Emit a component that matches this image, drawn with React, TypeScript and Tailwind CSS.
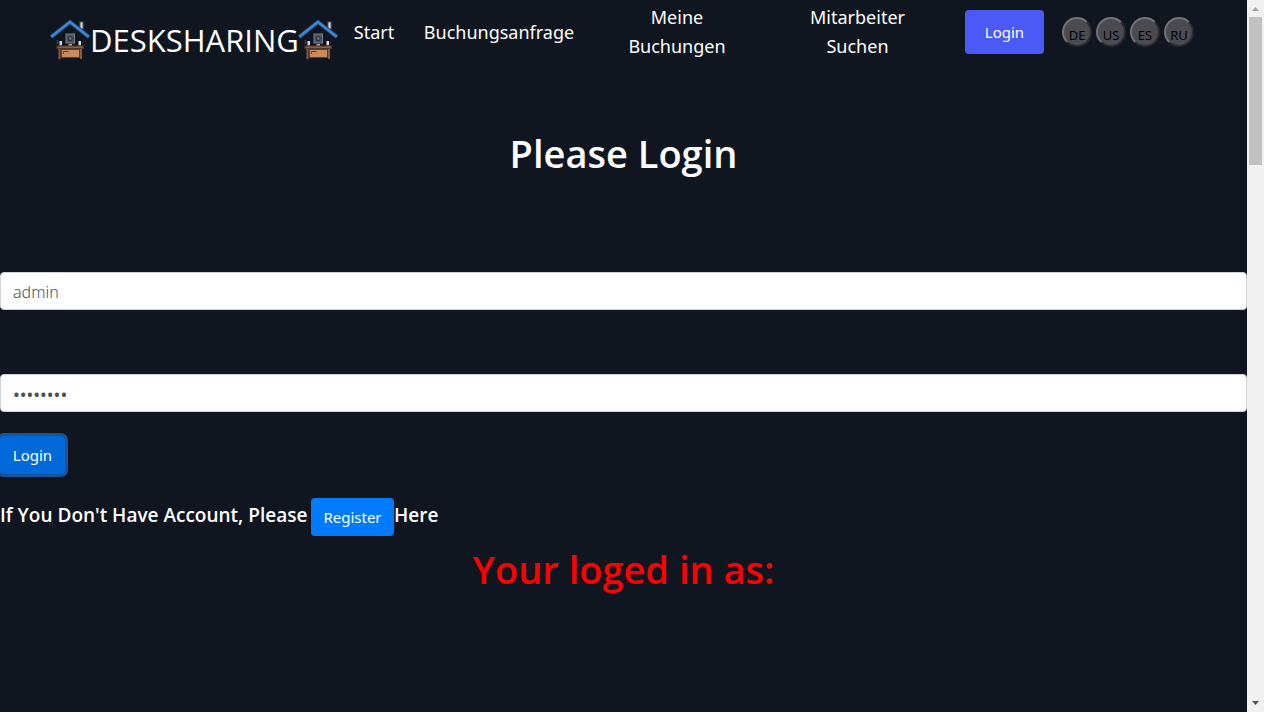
function DeskHouse() {
  return (
    <svg viewBox="0 0 40 42" className="h-[42px] w-10 shrink-0" aria-hidden="true">
      <rect x="30" y="3" width="3" height="7" fill="#d5d8dc" stroke="#555960" strokeWidth="1" />
      <path d="M1 18 L20 3 L39 18" fill="none" stroke="#23344f" strokeWidth="4.500" />
      <path d="M1.200 17.800 L20 3 L38.800 17.800" fill="none" stroke="#3a86d6" strokeWidth="2.800" />
      <rect x="16" y="15" width="8.500" height="9" fill="#50555f" stroke="#777c85" strokeWidth="1" />
      <circle cx="20.200" cy="19.500" r="2" fill="#6c717b" stroke="#2b2f38" strokeWidth="1.200" />
      <path d="M18.500 26h3.500" stroke="#a4a8ae" strokeWidth="2" />
      <path d="M7.500 21v4" stroke="#3c3f45" strokeWidth="1.500" />
      <rect x="9.500" y="22" width="2.500" height="4.500" fill="#d5d8dc" />
      <rect x="28.500" y="22" width="2.500" height="4.500" fill="#d5d8dc" />
      <rect x="7" y="27" width="26.500" height="2.500" fill="#90603f" stroke="#4c3429" strokeWidth="1" />
      <rect x="8.500" y="30" width="2" height="10" fill="#8a5c3e" />
      <rect x="30" y="30" width="2" height="10" fill="#8a5c3e" />
      <rect x="11.500" y="30.500" width="18" height="8" fill="#c98b5e" stroke="#58402f" strokeWidth="1" />
      <path d="M18.500 32.500 h-5 v2.500" fill="none" stroke="#58402f" strokeWidth="1" />
    </svg>
  );
}

const languages = ["DE", "US", "ES", "RU"];

function Navbar() {
  return (
    <header className="flex h-16 items-center justify-center pr-[3px]">
      <a href="#home" className="mt-4 flex items-center font-['Open_Sans',sans-serif] text-[31px] leading-[48px]">
        <DeskHouse />
        <span className="w-[208px] text-center whitespace-nowrap">DESKSHARING</span>
        <DeskHouse />
      </a>
      <nav className="flex items-center text-center text-[18px] leading-[29px]">
        <a href="#start" className="w-[72px]">Start</a>
        <a href="#request" className="w-[178px]">Buchungsanfrage</a>
        <a href="#bookings" className="w-[178px] px-9">Meine Buchungen</a>
        <a href="#search" className="w-[183px] px-10">Mitarbeiter Suchen</a>
      </nav>
      <button type="button" className="ml-4 h-11 w-[79px] rounded bg-[#4b59f7] text-[15px]">
        Login
      </button>
      <div className="ml-[18px] flex gap-1">
        {languages.map((code) => (
          <button
            key={code}
            type="button"
            className="size-[30px] rounded-full border-2 border-t-[#747474] border-r-[#2c2c2c] border-b-[#2c2c2c] border-l-[#747474] bg-[#4a4b50] pt-1.5 text-[13px] leading-[18px] text-black"
          >
            <span className="flex justify-center">{code}</span>
          </button>
        ))}
      </div>
    </header>
  );
}

function Scrollbar() {
  return (
    <div className="flex w-[17px] shrink-0 flex-col items-center bg-[#f1f1f1]" aria-hidden="true">
      <svg viewBox="0 0 17 17" className="size-[17px]">
        <path d="M5 11h7l-3.500-4z" fill="#a3a3a3" />
      </svg>
      <div className="h-[148px] w-[13px] bg-[#c1c1c1]" />
      <svg viewBox="0 0 17 17" className="mt-auto size-[17px]">
        <path d="M5 6h7l-3.500 4z" fill="#505050" />
      </svg>
    </div>
  );
}

export default function App() {
  const field =
    "block h-[38px] w-full rounded border border-[#ced4da] bg-white px-3 pt-0.5 text-[#495057] outline-none";
  return (
    <div className="flex min-h-screen bg-[#101620] font-['Noto_Sans','Open_Sans',sans-serif] text-white">
      <div className="min-w-0 flex-1">
        <Navbar />
        <main>
          <h1 className="mt-[65px] text-center font-['Open_Sans',sans-serif] text-[38px] leading-[48px] font-semibold">
            Please Login
          </h1>
          <form onSubmit={(e) => e.preventDefault()} className="mt-[95px]">
            <input
              aria-label="Username"
              type="text"
              defaultValue="admin"
              className={`${field} text-base font-light`}
            />
            <input
              aria-label="Password"
              type="password"
              defaultValue="password"
              className={`${field} mt-16 text-lg`}
            />
            <button
              type="submit"
              className="mt-6 block h-[38px] w-[65px] rounded bg-[#0069d9] text-[15px] ring-3 ring-[#1c5394]"
            >
              Login
            </button>
          </form>
          <div className="mt-6 flex font-['Open_Sans',sans-serif] text-[19px] leading-[34px] font-semibold">
            <span className="w-[311px] whitespace-nowrap">If You Don't Have Account, Please</span>
            <button
              type="button"
              className="h-[38px] w-[83px] rounded bg-[#007bff] font-['Noto_Sans',sans-serif] text-[15px] font-normal"
            >
              Register
            </button>
            <span>Here</span>
          </div>
          <h1 className="mt-[9px] text-center font-['Open_Sans',sans-serif] text-[38px] leading-[48px] font-semibold text-[#ff0000]">
            Your loged in as:
          </h1>
        </main>
      </div>
      <Scrollbar />
    </div>
  );
}
